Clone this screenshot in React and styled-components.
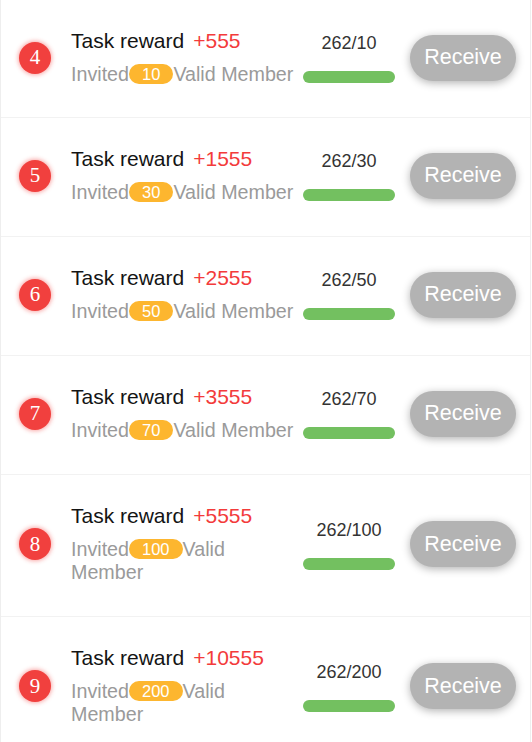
import styled, { createGlobalStyle } from 'styled-components'

const tasks = [
  { n: 4, reward: 555, need: 10 },
  { n: 5, reward: 1555, need: 30 },
  { n: 6, reward: 2555, need: 50 },
  { n: 7, reward: 3555, need: 70 },
  { n: 8, reward: 5555, need: 100 },
  { n: 9, reward: 10555, need: 200 },
]
const invited = 262

const Global = createGlobalStyle`
  body {
    margin: 0;
    background: #fff;
    font-family: "Liberation Sans", Arial, sans-serif;
  }
`

const List = styled.div`
  width: 531px;
  box-sizing: border-box;
  border-left: 1px solid #eee;
  border-right: 1px solid #eee;
`

const Row = styled.div`
  display: flex;
  align-items: center;
  padding: 29px 14px 32px 18px;
  border-bottom: 1px solid #f2f2f2;
  &:first-child {
    padding-bottom: 31px;
  }
`

const Num = styled.div`
  flex: none;
  width: 32px;
  height: 32px;
  border-radius: 50%;
  background: #f1403e;
  box-shadow: 0 0 4px 1px rgba(241, 64, 62, 0.45);
  color: #fff;
  font-family: "Liberation Serif", "Times New Roman", serif;
  font-size: 21px;
  display: flex;
  align-items: center;
  justify-content: center;
`

const Info = styled.div`
  flex: 1;
  min-width: 0;
  margin-left: 20px;
`

const Title = styled.div`
  font-size: 21px;
  line-height: 24px;
  color: #141414;
  white-space: nowrap;
`

const Reward = styled.span`
  color: #f33b3b;
  margin-left: 9px;
`

const Sub = styled.div`
  margin-top: 10px;
  font-size: 19.7px;
  line-height: 23px;
  color: #9a9a9a;
`

const Pill = styled.span`
  display: inline-block;
  vertical-align: 1px;
  height: 20px;
  line-height: 20px;
  padding: 0 13px;
  border-radius: 10px;
  background: #fdb62f;
  color: #fff;
  font-size: 16.5px;
`

const Progress = styled.div`
  flex: none;
  width: 92px;
  margin-left: 5px;
  display: flex;
  flex-direction: column;
  align-items: center;
  gap: 17px;
`

const Count = styled.div`
  font-size: 18px;
  line-height: 22px;
  color: #333;
`

const Bar = styled.div`
  width: 100%;
  height: 12px;
  border-radius: 6px;
  background: #73c060;
`

const Button = styled.div`
  flex: none;
  margin-left: 15px;
  width: 106px;
  height: 46px;
  border-radius: 23px;
  background: #b3b3b3;
  box-shadow: 0 2px 8px rgba(0, 0, 0, 0.3);
  color: #fff;
  font-size: 21.5px;
  display: flex;
  align-items: center;
  justify-content: center;
`

export default function App() {
  return (
    <List>
      <Global />
      {tasks.map((t) => (
        <Row key={t.n}>
          <Num>{t.n}</Num>
          <Info>
            <Title>
              Task reward<Reward>+{t.reward}</Reward>
            </Title>
            <Sub>
              Invited<Pill>{t.need}</Pill>Valid Member
            </Sub>
          </Info>
          <Progress>
            <Count>
              {invited}/{t.need}
            </Count>
            <Bar />
          </Progress>
          <Button>Receive</Button>
        </Row>
      ))}
    </List>
  )
}
